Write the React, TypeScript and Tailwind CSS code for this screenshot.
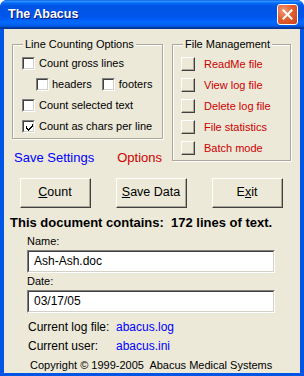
import React from 'react';

const font = { fontFamily: '"Liberation Sans", Arial, sans-serif' };

function CheckBox({ checked = false }: { checked?: boolean }) {
  return (
    <span className="relative block w-[13px] h-[13px] shrink-0 border-t border-l border-t-[#808080] border-l-[#808080] border-b border-r border-b-white border-r-white">
      <span className="block w-full h-full bg-white border-t border-l border-t-[#404040] border-l-[#404040] border-b border-r border-b-[#d4d0c8] border-r-[#d4d0c8]">
        {checked && (
          <svg width="9" height="9" viewBox="0 0 9 9" className="block ml-[1px] mt-[1px]">
            <path d="M1 3v3h1v1h1v1h1V7h1V6h1V5h1V4h1V1H7v2H6v1H5v1H4v1H3V5H2V3z" fill="#000" />
          </svg>
        )}
      </span>
    </span>
  );
}

function SmallButton() {
  return (
    <span className="block w-[14px] h-[14px] shrink-0 bg-[#ECE9D8] border-t border-l border-t-white border-l-white border-b border-r border-b-[#404040] border-r-[#404040]">
      <span className="block w-full h-full border-b border-r border-b-[#aca899] border-r-[#aca899]" />
    </span>
  );
}

function Group({ title, className, children }: { title: string; className: string; children: React.ReactNode }) {
  return (
    <div className={`relative border border-[#aca899] shadow-[inset_1px_1px_0_#fff,1px_1px_0_#fff] ${className}`}>
      <span className="absolute left-[10px] top-[-8px] px-[2px] bg-[#ECE9D8] text-[11px] leading-[14px] text-black">
        {title}
      </span>
      {children}
    </div>
  );
}

function BigButton({ children }: { children: React.ReactNode }) {
  return (
    <button className="w-[71px] h-[30px] bg-[#ECE9D8] border-t border-l border-t-white border-l-white border-b border-r border-b-[#404040] border-r-[#404040] p-0">
      <span className="flex w-full h-full items-center justify-center border-b border-r border-b-[#aca899] border-r-[#aca899] text-[12.5px] text-black">
        {children}
      </span>
    </button>
  );
}

function Field({ value }: { value: string }) {
  return (
    <div className="w-[248px] h-[23px] border-t border-l border-t-[#808080] border-l-[#808080] border-b border-r border-b-white border-r-white">
      <div className="w-full h-full bg-white border-t border-l border-t-[#404040] border-l-[#404040] border-b border-r border-b-[#d4d0c8] border-r-[#d4d0c8] pl-[5px] text-[12px] leading-[19px] text-black">
        {value}
      </div>
    </div>
  );
}

export default function App() {
  const files = ['ReadMe file', 'View log file', 'Delete log file', 'File statistics', 'Batch mode'];

  return (
    <div className="w-[304px] h-[376px] bg-white" style={font}>
      <div className="flex flex-col w-full h-full rounded-t-[7px] bg-[#0055e5] overflow-hidden">
        <div className="h-[29px] shrink-0 flex items-center justify-between pl-[8px] pr-[6px] bg-[linear-gradient(to_bottom,#0058EE_0%,#3593FF_4%,#288EFF_6%,#127DFF_8%,#036FFC_10%,#0262EE_14%,#0057E5_20%,#0054E3_24%,#0055EB_56%,#005BF5_66%,#026AFE_76%,#0062EF_86%,#0052D6_92%,#0040AB_94%,#003092_100%)]">
          <span className="text-white font-bold text-[12.5px] [text-shadow:1px_1px_0_#0a1874]">The Abacus</span>
          <span className="flex items-center justify-center w-[21px] h-[21px] rounded-[3px] border border-white bg-[radial-gradient(circle_at_30%_30%,#f09a7a_0%,#e5602f_45%,#c8431a_100%)]">
            <svg width="11" height="11" viewBox="0 0 11 11">
              <path d="M1.5 1.5l8 8M9.5 1.5l-8 8" stroke="#fff" strokeWidth="2" strokeLinecap="square" />
            </svg>
          </span>
        </div>

        <div className="flex-1 mx-[4px] mb-[4px] bg-[#ECE9D8] text-black flex flex-col">
          <div className="flex pl-[8px] pt-[15px]">
            <div className="w-[151px]">
              <Group title="Line Counting Options" className="h-[95px] pt-[12px] pl-[9px]">
                <div className="flex flex-col gap-[8px] text-[11px]">
                  <div className="flex items-center h-[13px] gap-[4px]">
                    <CheckBox />
                    <span>Count gross lines</span>
                  </div>
                  <div className="flex items-center h-[13px] pl-[14px]">
                    <CheckBox />
                    <span className="ml-[3px]">headers</span>
                    <span className="ml-[10px]"><CheckBox /></span>
                    <span className="ml-[4px]">footers</span>
                  </div>
                  <div className="flex items-center h-[13px] gap-[4px]">
                    <CheckBox />
                    <span>Count selected text</span>
                  </div>
                  <div className="flex items-center h-[13px] gap-[4px]">
                    <CheckBox checked />
                    <span>Count as chars per line</span>
                  </div>
                </div>
              </Group>
              <div className="flex mt-[11px] text-[13px] leading-[16px] pl-[2px]">
                <span className="text-[#0000ff]">Save Settings</span>
                <span className="ml-[23px] text-[#cc0000]">Options</span>
              </div>
            </div>
            <Group title="File Management" className="ml-[9px] w-[119px] h-[117px] pt-[12px] pl-[8px]">
              <div className="flex flex-col gap-[7px] text-[11px] text-[#cc0000]">
                {files.map((f) => (
                  <div key={f} className="flex items-center h-[14px] gap-[9px]">
                    <SmallButton />
                    <span>{f}</span>
                  </div>
                ))}
              </div>
            </Group>
          </div>

          <div className="flex gap-[25px] pl-[16px] mt-[12px]">
            <BigButton><span className="underline">C</span>ount</BigButton>
            <BigButton><span className="underline">S</span>ave Data</BigButton>
            <BigButton>E<span className="underline">x</span>it</BigButton>
          </div>

          <div className="pl-[6px] mt-[7px] font-bold text-[13px] leading-[16px]">
            This document contains:&nbsp; 172 lines of text.
          </div>

          <div className="pl-[23px] flex flex-col">
            <div className="mt-[4px] text-[11px] leading-[13px]">Name:</div>
            <div className="mt-[2px]"><Field value="Ash-Ash.doc" /></div>
            <div className="mt-[2px] text-[11px] leading-[13px]">Date:</div>
            <div className="mt-[2px]"><Field value="03/17/05" /></div>
            <div className="mt-[7px] flex text-[12px] leading-[15px] pl-[1px]">
              <span className="w-[88px]">Current log file:</span>
              <span className="text-[#0000ff]">abacus.log</span>
            </div>
            <div className="mt-[4px] flex text-[12px] leading-[15px] pl-[1px]">
              <span className="w-[88px]">Current user:</span>
              <span className="text-[#0000ff]">abacus.ini</span>
            </div>
            <div className="mt-[4px] text-[11px] leading-[15px] pl-[3px] whitespace-pre">
              {'Copyright © 1999-2005  Abacus Medical Systems'}
            </div>
          </div>
        </div>
      </div>
    </div>
  );
}
